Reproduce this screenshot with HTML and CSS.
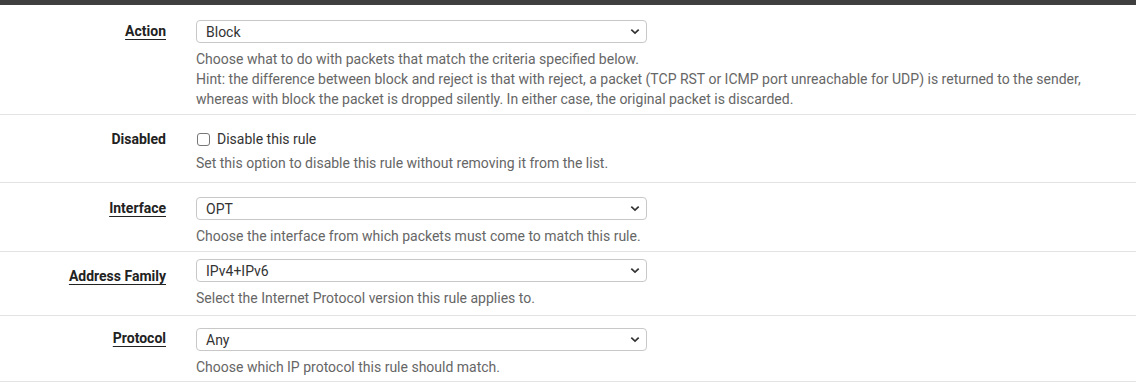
FILE: index.html
```html
<!DOCTYPE html>
<html>
<head>
<meta charset="utf-8">
<link rel="stylesheet" href="styles.css">
</head>
<body>
<div class="topbar"></div>
<div class="panel">
  <div class="row r1">
    <div class="label"><span class="req">Action</span></div>
    <div class="field">
      <div class="select"><span>Block</span><svg class="chev" width="10" height="7" viewBox="0 0 10 7"><path d="M1.3 1.6 L5 5.1 L8.7 1.6" fill="none" stroke="#333" stroke-width="1.7"/></svg></div>
      <div class="help">Choose what to do with packets that match the criteria specified below.<br>Hint: the difference between block and reject is that with reject, a packet (TCP RST or ICMP port unreachable for UDP) is returned to the sender,<br>whereas with block the packet is dropped silently. In either case, the original packet is discarded.</div>
    </div>
  </div>
  <div class="row r2">
    <div class="label"><span class="plain">Disabled</span></div>
    <div class="field">
      <label class="check"><span class="box"></span>Disable this rule</label>
      <div class="help">Set this option to disable this rule without removing it from the list.</div>
    </div>
  </div>
  <div class="row r3">
    <div class="label"><span class="req">Interface</span></div>
    <div class="field">
      <div class="select"><span>OPT</span><svg class="chev" width="10" height="7" viewBox="0 0 10 7"><path d="M1.3 1.6 L5 5.1 L8.7 1.6" fill="none" stroke="#333" stroke-width="1.7"/></svg></div>
      <div class="help">Choose the interface from which packets must come to match this rule.</div>
    </div>
  </div>
  <div class="row r4">
    <div class="label"><span class="req">Address Family</span></div>
    <div class="field">
      <div class="select"><span>IPv4+IPv6</span><svg class="chev" width="10" height="7" viewBox="0 0 10 7"><path d="M1.3 1.6 L5 5.1 L8.7 1.6" fill="none" stroke="#333" stroke-width="1.7"/></svg></div>
      <div class="help">Select the Internet Protocol version this rule applies to.</div>
    </div>
  </div>
  <div class="row r5">
    <div class="label"><span class="req">Protocol</span></div>
    <div class="field">
      <div class="select"><span>Any</span><svg class="chev" width="10" height="7" viewBox="0 0 10 7"><path d="M1.3 1.6 L5 5.1 L8.7 1.6" fill="none" stroke="#333" stroke-width="1.7"/></svg></div>
      <div class="help">Choose which IP protocol this rule should match.</div>
    </div>
  </div>
</div>
</body>
</html>
```
FILE: styles.css
```css
html, body {
  margin: 0;
  padding: 0;
  background: #fff;
}
body {
  font-family: Roboto, "Liberation Sans", sans-serif;
  font-size: 14px;
  color: #333;
}
.topbar {
  height: 5px;
  background: #3f3f3f;
}
.row {
  display: flex;
  border-bottom: 1px solid #e3e3e3;
}
.label {
  width: 166px;
  text-align: right;
  font-weight: bold;
  font-size: 14px;
  color: #222;
  line-height: 23px;
  flex-shrink: 0;
}
.req {
  text-decoration: underline;
  text-underline-offset: 3px;
  text-decoration-thickness: 1px;
}
.field {
  margin-left: 30px;
  display: flex;
  flex-direction: column;
}
.select {
  height: 21px;
  width: 434px;
  border: 1px solid #c8c8c8;
  border-radius: 4px;
  display: flex;
  align-items: center;
  justify-content: space-between;
  padding: 0 6px 0 9px;
  box-sizing: content-box;
  color: #333;
  font-size: 14px;
}
.help {
  color: #666;
  line-height: 20px;
  margin-top: 6px;
}
.check {
  display: flex;
  align-items: center;
  height: 20px;
  color: #333;
  font-size: 14px;
}
.box {
  width: 11px;
  height: 11px;
  border: 1px solid #777;
  border-radius: 3px;
  margin: 0 7px 0 1px;
}
.r1 { padding: 15px 0 5px; }
.r2 { padding: 14px 0 9px; }
.r2 .label { line-height: 20px; }
.r2 .help { margin-top: 4px; }
.r3 { padding: 14px 0 5px; }
.r4 { padding: 7px 0 7px; }
.r4 .label { padding-top: 6px; }
.r5 { padding: 12px 0 4px; }
.r5 .label { line-height: 20px; }
```
